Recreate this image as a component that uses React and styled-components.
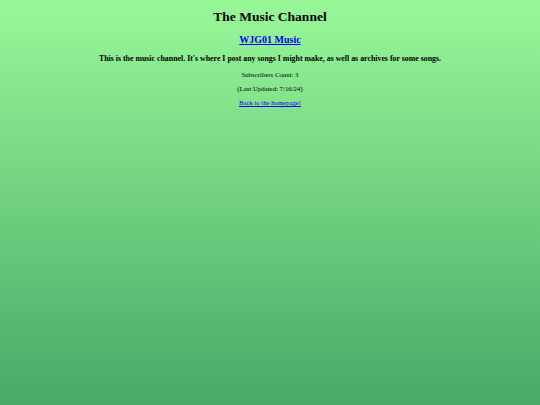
import React from 'react'
import styled, { createGlobalStyle } from 'styled-components'

const GlobalStyle = createGlobalStyle`
    html, body {
        margin: 0;
        padding: 0;
        min-height: 100%;
    }
    body {
        font-family: "Liberation Serif", "Times New Roman", serif;
        background: linear-gradient(to bottom, #98f898 0%, #48a868 100%);
        background-attachment: fixed;
        min-height: 405px;
    }
`

const Page = styled.main`
    display: flex;
    flex-direction: column;
    align-items: center;
    text-align: center;
    padding-top: 9px;
    color: #000;
`

const Title = styled.h1`
    font-size: 13.5px;
    font-weight: bold;
    margin: 0 0 9px;
    line-height: 16px;
`

const ChannelLink = styled.a`
    font-size: 10px;
    font-weight: bold;
    color: #0000ee;
    text-decoration: underline;
    line-height: 12px;
    margin-bottom: 7.5px;
`

const Intro = styled.h4`
    font-size: 7.86px;
    font-weight: bold;
    margin: 0 0 7.5px;
    line-height: 10px;
`

const Small = styled.p`
    font-size: 6.8px;
    margin: 0 0 6px;
    line-height: 8px;
`

const BackLink = styled.a`
    font-size: 6.7px;
    color: #0000ee;
    text-decoration: underline;
    line-height: 8px;
`

const App = () => {
    return (
        <>
            <GlobalStyle />
            <Page>
                <Title>The Music Channel</Title>
                <ChannelLink href="#">WJG01 Music</ChannelLink>
                <Intro>This is the music channel. It's where I post any songs I might make, as well as archives for some songs.</Intro>
                <Small>Subscribers Count: 3</Small>
                <Small>(Last Updated: 7/16/24)</Small>
                <BackLink href="#">Back to the homepage!</BackLink>
            </Page>
        </>
    )
}

export default App
